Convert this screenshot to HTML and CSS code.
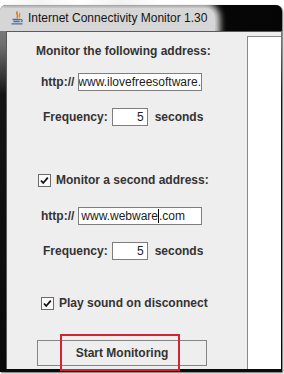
FILE: index.html
```html
<!DOCTYPE html>
<html lang="en">
	<head>
		<meta charset="UTF-8">
		<title>Internet Connectivity Monitor 1.30</title>
		<link rel="stylesheet" href="styles.css">
	</head>
	<body>
		<div class="behind"></div>
		<div class="window">
			<div class="titlebar">
				<div class="glow">
					<svg class="appicon" width="13" height="14" viewBox="0 0 13 14">
						<path d="M6.5 0.5C4 3 8.5 4 5.8 7" fill="none" stroke="#e07a1a" stroke-width="1.6"/>
						<path d="M9 2C7.6 3.6 9.8 4.4 8.2 6.4" fill="none" stroke="#e58a2a" stroke-width="1.2"/>
						<path d="M1.5 8.5h8" stroke="#4a6fa5" stroke-width="1.3"/>
						<path d="M2.5 10.5h6" stroke="#4a6fa5" stroke-width="1.3"/>
						<path d="M0.5 12.8h11" stroke="#4a6fa5" stroke-width="1.3"/>
						<path d="M9.5 8.4c2.4 0 2.4 2.4 0 2.6" fill="none" stroke="#4a6fa5" stroke-width="1.1"/>
					</svg>
					<span class="title">Internet Connectivity Monitor 1.30</span>
				</div>
			</div>
			<div class="frame">
				<div class="panel">
					<div class="form">
						<div class="heading">Monitor the following address:</div>

						<div class="row row-url">
							<span class="label">http://</span>
							<div class="field url"><span class="scrolled">www.ilovefreesoftware.</span></div>
						</div>
						<div class="row row-freq">
							<span class="label">Frequency:</span>
							<div class="field num">5</div>
							<span class="label unit">seconds</span>
						</div>

						<div class="row row-check">
							<span class="check">
								<svg width="11" height="11" viewBox="0 0 11 11"><path d="M2 5.5l2.2 2.5L8.8 2.6" fill="none" stroke="#111" stroke-width="1.8"/></svg>
							</span>
							<span class="label">Monitor a second address:</span>
						</div>

						<div class="row row-url2">
							<span class="label">http://</span>
							<div class="field url">www.webware<span class="caret"></span>.com</div>
						</div>
						<div class="row row-freq">
							<span class="label">Frequency:</span>
							<div class="field num">5</div>
							<span class="label unit">seconds</span>
						</div>

						<div class="row row-sound">
							<span class="check">
								<svg width="11" height="11" viewBox="0 0 11 11"><path d="M2 5.5l2.2 2.5L8.8 2.6" fill="none" stroke="#111" stroke-width="1.8"/></svg>
							</span>
							<span class="label">Play sound on disconnect</span>
						</div>

						<div class="start">
							Start Monitoring
							<div class="mark"></div>
						</div>
					</div>
					<div class="list"></div>
				</div>
			</div>
		</div>
	</body>
</html>
```

FILE: styles.css
```css
body{
	margin:0;
	width:284px;
	height:374px;
	overflow:hidden;
	background:#fff;
	font-family:"Liberation Sans",Arial,sans-serif;
}

/*窗口上方的空白*/
.behind{
	height:5px;
	background:linear-gradient(to right,#fff 0,#f4f4f4 40px,#fff 80px,#f2f2f2 120px,#fff 160px);
}

/*窗口*/
.window{
	width:282px;
	height:367px;
	display:flex;
	flex-direction:column;
	background:linear-gradient(to bottom,#8c8c8c 0,#6e6e6e 40px,#141414 90px,#0a0a0a 100%);
	border-radius:6px 6px 0 0;
	box-shadow:1px 1px 2px rgba(0,0,0,0.6);
}

.titlebar{
	height:26px;
	display:flex;
	background:linear-gradient(to right,#a8a8a8 0,#0b0b0b 6px,#050505 100%);
	border-radius:6px 6px 0 0;
	overflow:hidden;
}

.glow{
	display:flex;
	align-items:center;
	margin-top:3px;
	padding:0 8px 3px 11px;
	background:#d6d6d6;
	box-shadow:0 0 6px 5px #d6d6d6;
	border-radius:0 10px 0 0;
}

.appicon{
	margin-right:4px;
}

.title{
	font-size:12px;
	color:#141414;
	white-space:nowrap;
}

.frame{
	flex:1;
	display:flex;
	padding:0 1px 3px 6px;
}

.panel{
	flex:1;
	display:flex;
	background:#eeeeee;
	border-top:1px solid #5a5a5a;
	border-left:1px solid #5a5a5a;
}

.form{
	width:240px;
	display:flex;
	flex-direction:column;
	font-size:12px;
	font-weight:bold;
	color:#333;
}

.list{
	flex:1;
	margin-top:4px;
	background:#fff;
	border-top:1px solid #8a8a8a;
	border-left:1px solid #8a8a8a;
}

.heading{
	margin-top:11px;
	padding-left:29px;
	line-height:16px;
}

.row{
	display:flex;
	align-items:center;
	height:18px;
}

.row-url{
	margin-top:14px;
	padding-left:34px;
	gap:4px;
}
.row-url2{
	margin-top:20px;
	padding-left:34px;
	gap:4px;
}
.row-freq{
	margin-top:17px;
	padding-left:36px;
	gap:4px;
}
.row-check{
	margin-top:47px;
	height:14px;
	padding-left:31px;
	gap:5px;
}
.row-sound{
	margin-top:36px;
	height:14px;
	padding-left:34px;
	gap:5px;
}

.unit{
	margin-left:3px;
}

.field{
	box-sizing:border-box;
	height:18px;
	line-height:16px;
	background:#fff;
	border:1px solid #7e7e7e;
	font-weight:normal;
	font-size:12px;
	color:#222;
	white-space:nowrap;
	overflow:hidden;
}

.url{
	width:124px;
	padding-left:2px;
}

.scrolled{
	display:inline-block;
	margin-left:-3px;
}

.caret{
	display:inline-block;
	width:1px;
	height:14px;
	background:#000;
	vertical-align:-3px;
}

.num{
	width:36px;
	text-align:right;
	padding-right:3px;
}

.check{
	box-sizing:border-box;
	width:13px;
	height:13px;
	border:1px solid #6a6a6a;
	background:#fafafa;
	display:flex;
	align-items:center;
	justify-content:center;
}

/*按钮*/
.start{
	position:relative;
	box-sizing:border-box;
	margin-top:30px;
	margin-left:30px;
	width:170px;
	height:26px;
	border:1px solid #858585;
	background:#eeeeee;
	display:flex;
	align-items:center;
	justify-content:center;
}

/*红色标注框*/
.mark{
	position:absolute;
	left:22px;
	top:-7px;
	width:120px;
	height:37px;
	box-sizing:border-box;
	border:2px solid #d42433;
}
```
